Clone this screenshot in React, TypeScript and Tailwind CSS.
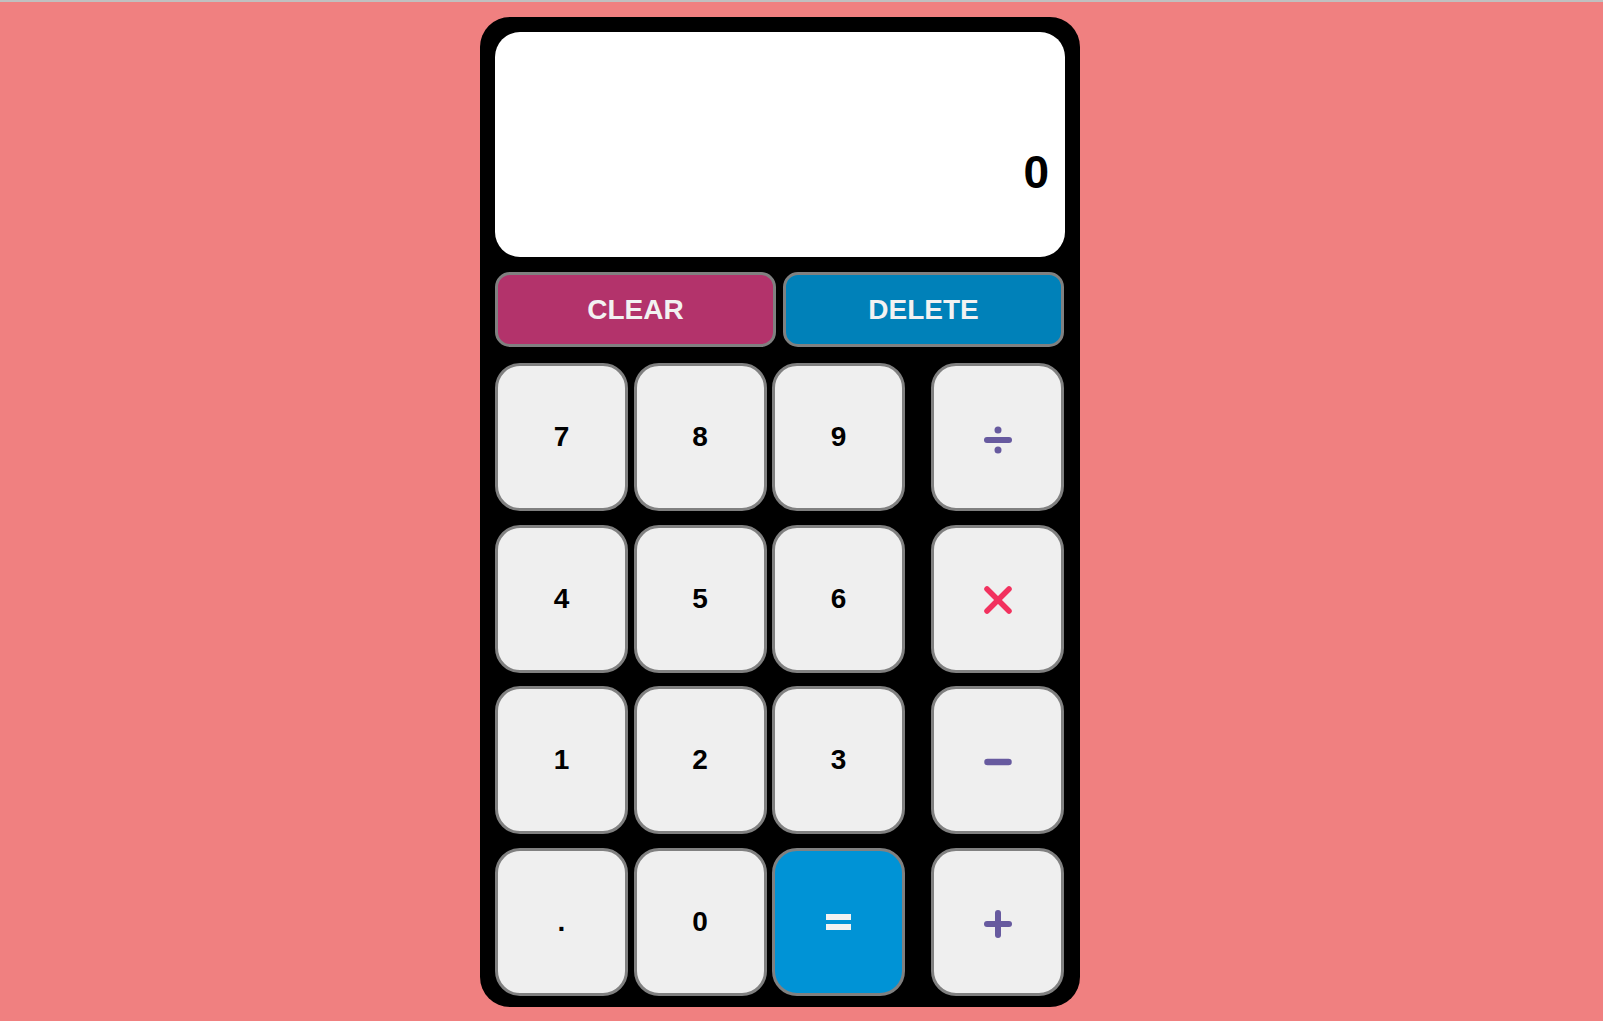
import React from "react";

const Num = ({ label }: { label: string }) => (
  <button className="bg-[#efefef] border-[3px] border-[#808080] rounded-[25px] flex items-center justify-center text-[28px] font-bold text-black leading-none">
    {label}
  </button>
);

const Op = ({ children }: { children: React.ReactNode }) => (
  <button className="h-[148px] bg-[#efefef] border-[3px] border-[#808080] rounded-[25px] flex items-center justify-center">
    {children}
  </button>
);

export default function App() {
  const nums = ["7", "8", "9", "4", "5", "6", "1", "2", "3", "."];
  return (
    <div
      className="min-h-screen bg-[#f08080] border-t-2 border-[#c0c0c0] pt-[15px] pb-[14px]"
      style={{ fontFamily: '"Liberation Sans", Arial, sans-serif' }}
    >
      <div className="ml-[480px] w-[600px] h-[990px] bg-black rounded-[30px] px-[15px] pt-[15px] flex flex-col">
        <div className="h-[225px] shrink-0 bg-white rounded-[25px] flex justify-end pt-[117px] pr-[16px]">
          <span className="text-[46px] font-bold leading-none text-black">0</span>
        </div>
        <div className="mt-[15px] flex gap-[7px] h-[75px] shrink-0">
          <button className="w-[281px] bg-[#b3336b] border-[3px] border-[#808080] rounded-[15px] text-[28px] font-bold text-[#f2f2f2] leading-none">
            CLEAR
          </button>
          <button className="w-[281px] bg-[#0081b9] border-[3px] border-[#808080] rounded-[15px] text-[28px] font-bold text-[#f2f2f2] leading-none">
            DELETE
          </button>
        </div>
        <div className="mt-[16px] flex justify-between pr-[1px] shrink-0">
          <div className="grid grid-cols-[133px_133px_133px] auto-rows-[148px] gap-x-[5.5px] gap-y-[13.5px]">
            {nums.map((n) => (
              <Num key={n} label={n} />
            ))}
            <Num label="0" />
            <button className="bg-[#0093d6] border-[3px] border-[#808080] rounded-[25px] flex flex-col items-center justify-center gap-[4px]">
              <span className="block w-[25px] h-[6px] bg-[#f2f2f2]" />
              <span className="block w-[25px] h-[6px] bg-[#f2f2f2]" />
            </button>
          </div>
          <div className="w-[133px] flex flex-col gap-[13.5px]">
            <Op>
              <svg width="28" height="28" viewBox="0 0 28 28" className="translate-y-[3px]">
                <line x1="3" y1="14" x2="25" y2="14" stroke="#675a9f" strokeWidth="6" strokeLinecap="round" />
                <circle cx="14" cy="4" r="3.5" fill="#675a9f" />
                <circle cx="14" cy="24" r="3.5" fill="#675a9f" />
              </svg>
            </Op>
            <Op>
              <svg width="28" height="28" viewBox="0 0 28 28" className="translate-y-[1px]">
                <line x1="3" y1="3" x2="25" y2="25" stroke="#f2325f" strokeWidth="5.5" strokeLinecap="round" />
                <line x1="25" y1="3" x2="3" y2="25" stroke="#f2325f" strokeWidth="5.5" strokeLinecap="round" />
              </svg>
            </Op>
            <Op>
              <svg width="28" height="28" viewBox="0 0 28 28" className="translate-y-[2px]">
                <line x1="3.5" y1="14" x2="24.5" y2="14" stroke="#675a9f" strokeWidth="6.5" strokeLinecap="round" />
              </svg>
            </Op>
            <Op>
              <svg width="28" height="28" viewBox="0 0 28 28" className="translate-y-[2px]">
                <line x1="3" y1="14" x2="25" y2="14" stroke="#675a9f" strokeWidth="6" strokeLinecap="round" />
                <line x1="14" y1="3" x2="14" y2="25" stroke="#675a9f" strokeWidth="6" strokeLinecap="round" />
              </svg>
            </Op>
          </div>
        </div>
      </div>
    </div>
  );
}
